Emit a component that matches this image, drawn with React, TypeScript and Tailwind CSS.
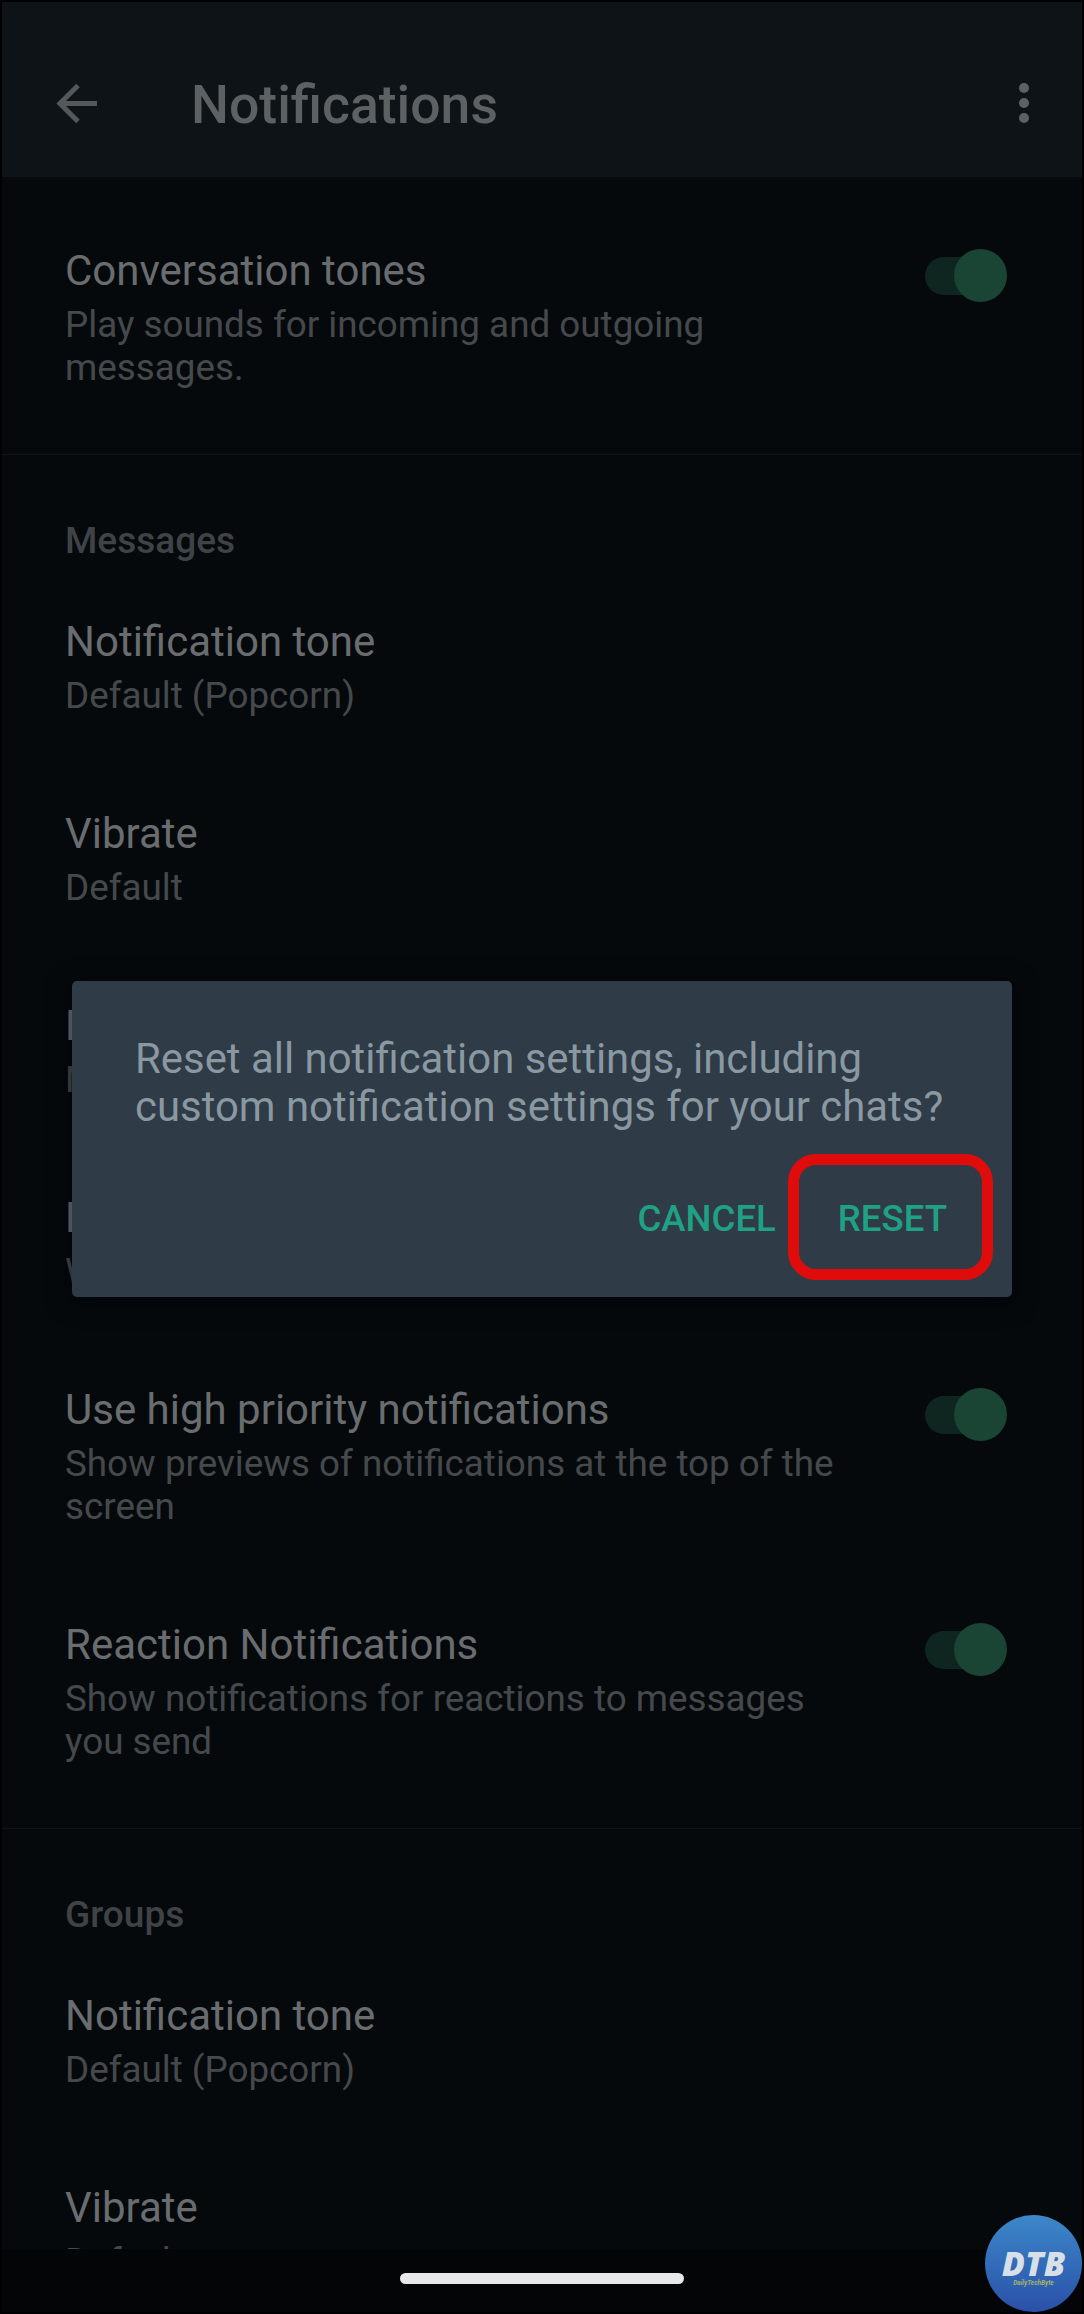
type RowProps = {
  title: string;
  sub: string;
  toggle?: boolean;
};

function Row({ title, sub, toggle }: RowProps) {
  return (
    <div className="flex items-start justify-between pl-[63px] pr-[75px] pt-[45px] pb-[46px]">
      <div className="w-[780px]">
        <div className="text-[42px] leading-[52px] text-[#6a6d6f]">{title}</div>
        <div className="mt-[6px] text-[36.8px] leading-[43px] text-[#45494c]">{sub}</div>
      </div>
      {toggle && (
        <div className="relative mt-[4px] h-[53px] w-[82px]">
          <div className="mt-[8px] h-[38px] w-[60px] rounded-full bg-[#0f2620]" />
          <div className="absolute right-0 top-0 h-[53px] w-[53px] rounded-full bg-[#1a4534]" />
        </div>
      )}
    </div>
  );
}

function SectionTitle({ children }: { children: string }) {
  return (
    <div className="pl-[63px] pt-[66px] pb-[10px] text-[37px] font-medium leading-[40px] text-[#3f4346]">
      {children}
    </div>
  );
}

export default function App() {
  return (
    <div className="relative flex h-[2314px] w-[1084px] flex-col overflow-hidden border-2 border-black bg-[#05090c] font-[Roboto,sans-serif]">
      <header className="flex h-[175px] shrink-0 items-center bg-[#0d1316] pl-[53px] pr-[53px] pt-[32px]">
        <svg width="42" height="41" viewBox="0 0 42 41" fill="none" stroke="#55585a" strokeWidth="5" className="mb-[5px] shrink-0">
          <path d="M42 20.5H4" />
          <path d="M23 2.5L5 20.5L23 38.5" />
        </svg>
        <h1 className="ml-[94px] flex-1 text-[53.5px] font-medium text-[#5e6163]">Notifications</h1>
        <div className="mb-[5px] flex flex-col gap-[5px]">
          <span className="h-[10px] w-[10px] rounded-full bg-[#5e6163]" />
          <span className="h-[10px] w-[10px] rounded-full bg-[#5e6163]" />
          <span className="h-[10px] w-[10px] rounded-full bg-[#5e6163]" />
        </div>
      </header>

      <main className="min-h-0 flex-1 overflow-hidden pt-[23px]">
        <div className="pb-[19px]">
          <Row title="Conversation tones" sub="Play sounds for incoming and outgoing messages." toggle />
        </div>
        <div className="border-t border-[#0e1417]">
          <SectionTitle>Messages</SectionTitle>
          <Row title="Notification tone" sub="Default (Popcorn)" />
          <Row title="Vibrate" sub="Default" />
          <Row title="Popup notification" sub="No popup" />
          <Row title="Light" sub="White" />
          <Row title="Use high priority notifications" sub="Show previews of notifications at the top of the screen" toggle />
          <div className="pb-[19px]">
            <Row title="Reaction Notifications" sub="Show notifications for reactions to messages you send" toggle />
          </div>
        </div>
        <div className="border-t border-[#0e1417]">
          <SectionTitle>Groups</SectionTitle>
          <Row title="Notification tone" sub="Default (Popcorn)" />
          <Row title="Vibrate" sub="Default" />
        </div>
      </main>

      <div className="flex h-[63px] shrink-0 justify-center bg-[#030507] pt-[24px]">
        <div className="h-[11px] w-[284px] rounded-full bg-[#e8e8ea]" />
      </div>

      <div className="absolute left-[70px] top-[979px] w-[940px] rounded-[5px] bg-[#2f3b46] pl-[63px] pr-[65px] pt-[54px] pb-[54px] shadow-[0_4px_24px_rgba(0,0,0,0.5)]">
        <p className="text-[41.9px] leading-[48px] text-[#8a98a2]">
          Reset all notification settings, including
          <br />
          custom notification settings for your chats?
        </p>
        <div className="mt-[64px] flex justify-end gap-[62px] text-[36.6px] font-medium leading-[48px] text-[#1fa184]">
          <button>CANCEL</button>
          <button className="relative">
            RESET
            <span className="absolute -bottom-[37px] -left-[50px] -right-[46px] -top-[41px] rounded-[28px] border-[11px] border-[#e00c0c]" />
          </button>
        </div>
      </div>

      <div className="absolute bottom-0 right-0 flex h-[97px] w-[97px] flex-col items-center justify-center rounded-full bg-gradient-to-b from-[#3d88c9] to-[#2a50a8]">
        <span className="mt-[8px] text-[34px] font-black italic leading-[30px] text-[#d9dfe6] font-[Open_Sans,sans-serif]">DTB</span>
        <span className="text-[6.5px] font-bold italic leading-[10px] text-[#a8b36a]">DailyTechByte</span>
      </div>
    </div>
  );
}
